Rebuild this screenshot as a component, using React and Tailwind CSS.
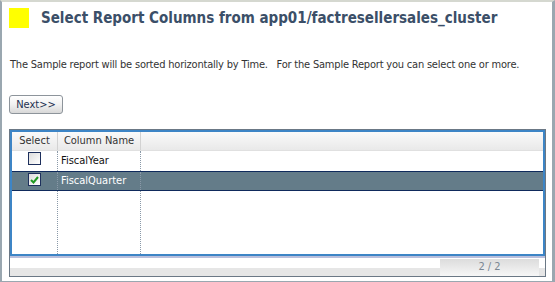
import React from 'react';

const Checkbox = ({ checked }) => (
    <div className="w-[13px] h-[13px] border border-[#1d2f5c] bg-gradient-to-br from-[#dcdcdc] to-white flex items-center justify-center">
        {checked && (
            <svg width="9" height="8" viewBox="0 0 9 8">
                <path d="M1 4 L3.5 6.5 L8 1" fill="none" stroke="#1f9a22" strokeWidth="2" />
            </svg>
        )}
    </div>
);

const App = () => {
    const rows = [
        { name: 'FiscalYear', selected: false },
        { name: 'FiscalQuarter', selected: true },
    ];

    return (
        <div className="w-[555px] h-[282px] bg-white border-l-2 border-l-[#9aa7b0] border-t-2 border-t-[#d5d8d0] border-r-[3px] border-r-[#9aa7b0] border-b border-b-[#9aa7b0] font-['DejaVu_Sans',sans-serif] overflow-hidden">
            {/* Title */}
            <div className="flex items-center pl-[7px] pt-[6px] h-[26px]">
                <div className="w-[20px] h-[20px] bg-[#ffff00] shrink-0"></div>
                <h1 className="ml-[12px] text-[15px] leading-[20px] font-bold text-[#3b4f68] font-['DejaVu_Sans_Condensed','DejaVu_Sans',sans-serif] whitespace-nowrap">
                    Select Report Columns from app01/factresellersales_cluster
                </h1>
            </div>

            {/* Description */}
            <p className="mt-[30px] ml-[8px] text-[11px] leading-[13px] text-[#333] tracking-[-0.2px] whitespace-pre font-['DejaVu_Sans_Condensed','DejaVu_Sans',sans-serif]">
                The Sample report will be sorted horizontally by Time.{'   '}For the Sample Report you can select one or more.
            </p>

            {/* Next button */}
            <button className="mt-[24px] ml-[7px] w-[54px] h-[19px] border border-[#8d949b] rounded-[3px] bg-gradient-to-b from-white via-[#f1f1f1] to-[#d8d8d8] text-[11px] leading-[15px] text-[#1c3050] font-['DejaVu_Sans_Condensed','DejaVu_Sans',sans-serif]">
                Next&gt;&gt;
            </button>

            {/* Grid */}
            <div className="mt-[14px] ml-[7px] w-[537px] border border-[#6b7885] flex flex-col">
                <div className="h-[126px] border-2 border-[#3d85c6] flex flex-col">
                    {/* Header */}
                    <div className="h-[19px] flex bg-gradient-to-b from-[#fafafa] to-[#e9e9e9] border-b border-[#e0e0e0] text-[11px] text-[#333] font-['DejaVu_Sans_Condensed','DejaVu_Sans',sans-serif]">
                        <div className="w-[46px] flex items-center justify-center border-r border-r-[#d2d2d2]">Select</div>
                        <div className="w-[83px] flex items-center justify-center border-r border-r-[#d2d2d2]">Column Name</div>
                        <div className="flex-1"></div>
                    </div>

                    {/* Body */}
                    <div className="flex-1 flex flex-col">
                        {rows.map((r) => (
                            <div
                                key={r.name}
                                className={`h-[20px] flex text-[11px] font-['DejaVu_Sans_Condensed','DejaVu_Sans',sans-serif] ${
                                    r.selected
                                        ? 'bg-[#647c89] text-white border-t border-b border-[#0f2a5c]'
                                        : 'bg-white text-[#111]'
                                }`}
                            >
                                <div className="w-[46px] flex justify-center pt-[1px] border-r border-dotted border-r-[#8a99a8]">
                                    <Checkbox checked={r.selected} />
                                </div>
                                <div className="w-[83px] flex items-center pl-[3px] border-r border-dotted border-r-[#8a99a8]">{r.name}</div>
                                <div className="flex-1"></div>
                            </div>
                        ))}
                        <div className="flex-1 flex">
                            <div className="w-[46px] border-r border-dotted border-r-[#8a99a8]"></div>
                            <div className="w-[83px] border-r border-dotted border-r-[#8a99a8]"></div>
                        </div>
                    </div>
                </div>

                {/* Footer */}
                <div className="h-[2px] bg-[#b9bfdc]"></div>
                <div className="h-[18px] flex">
                    <div className="flex-1 flex flex-col">
                        <div className="h-[10px] bg-white"></div>
                        <div className="flex-1 bg-[#e6e6e6]"></div>
                    </div>
                    <div className="w-[99px] mt-[1px] bg-gradient-to-b from-[#dcdcdc] to-[#f7f7f7] flex items-center justify-center text-[11px] text-[#7a8692] font-['DejaVu_Sans_Condensed','DejaVu_Sans',sans-serif]">
                        2 / 2
                    </div>
                    <div className="w-[6px] flex flex-col">
                        <div className="h-[10px] bg-white"></div>
                        <div className="flex-1 bg-[#e6e6e6]"></div>
                    </div>
                </div>
            </div>
        </div>
    );
};

export default App;
